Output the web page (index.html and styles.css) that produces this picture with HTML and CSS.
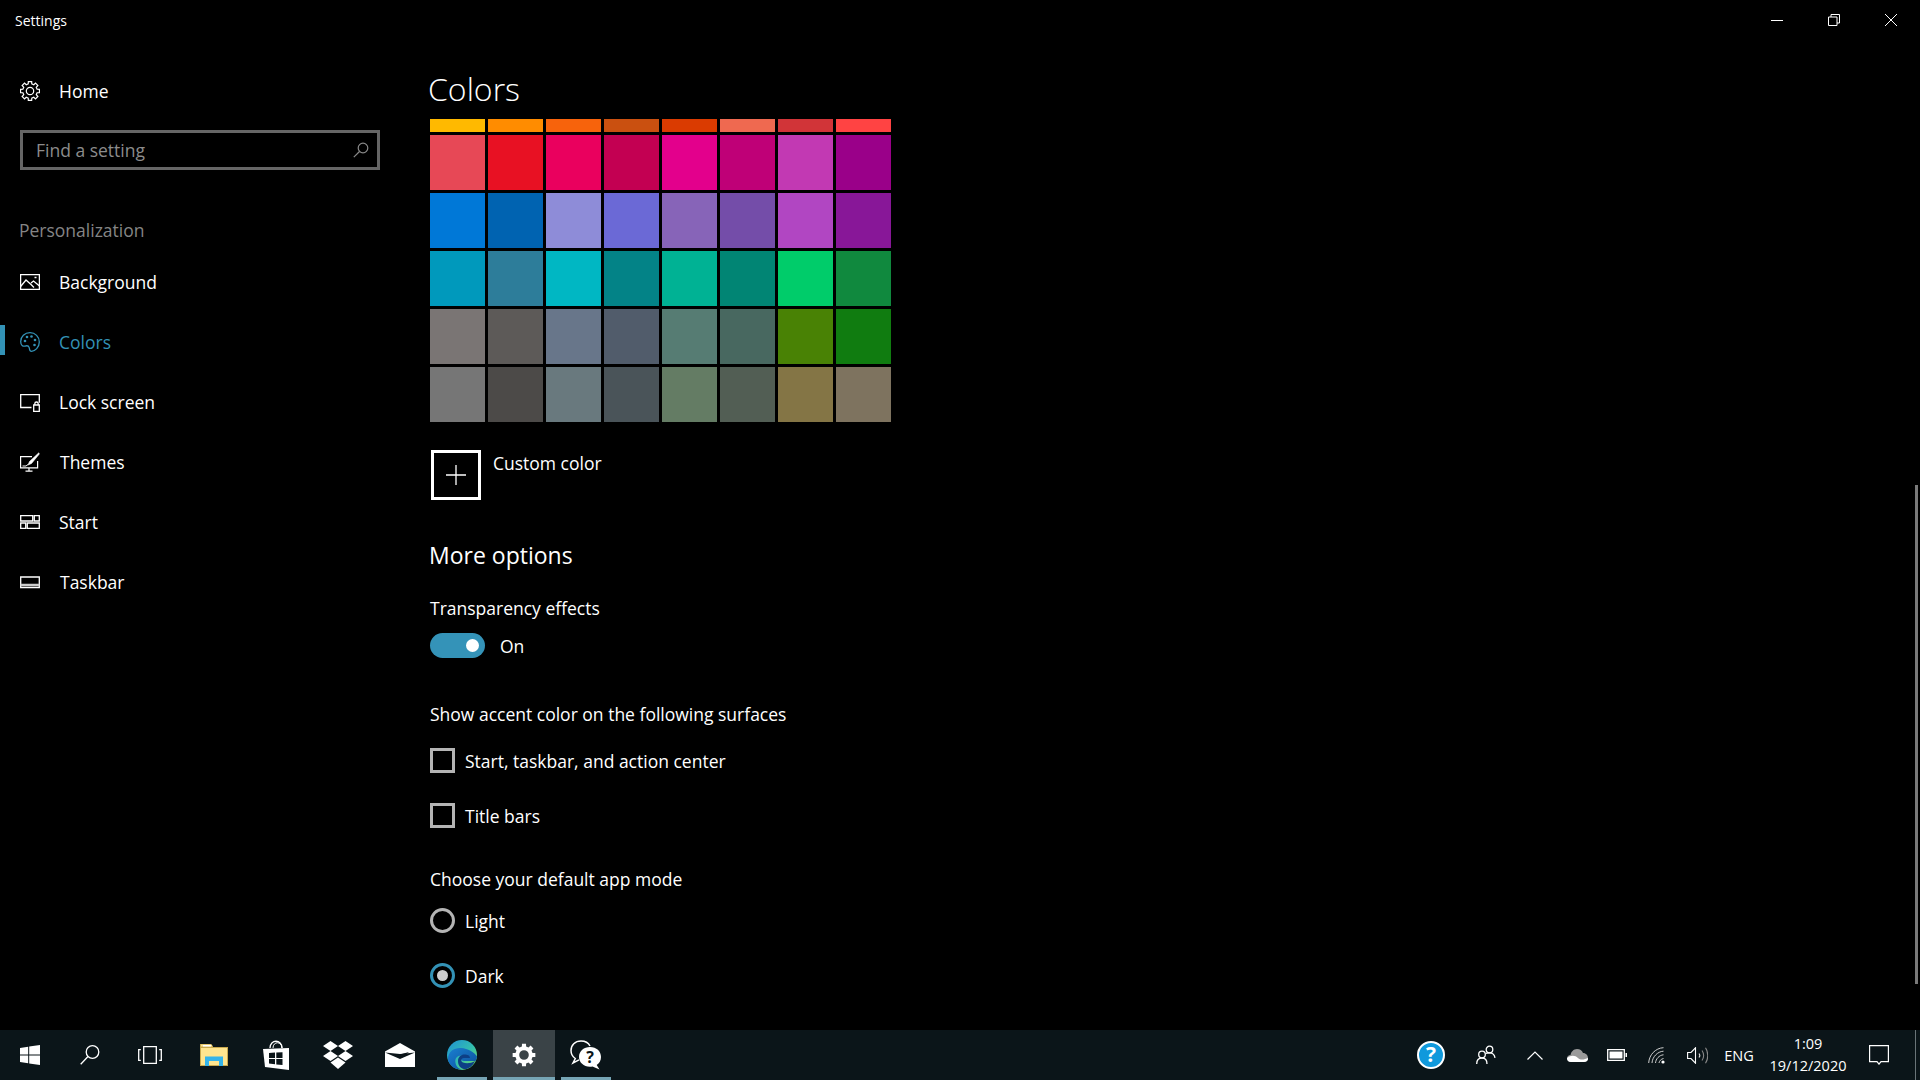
FILE: index.html
```html
<!DOCTYPE html>
<html lang="en">
<head>
<meta charset="UTF-8">
<title>Settings - Colors</title>
<link rel="stylesheet" href="styles.css">
</head>
<body>
<div class="window">
  <div class="titlebar">
    <span class="app-name">Settings</span>
    <div class="win-buttons">
      <div class="win-btn"><svg width="12" height="12" viewBox="0 0 12 12"><path d="M0 6.5h12" stroke="#fff" fill="none"/></svg></div>
      <div class="win-btn"><svg width="12" height="12" viewBox="0 0 12 12"><path d="M.5 3h8.500v8.500h-8.500zM3 3V.5h8.500V9H9" stroke="#fff" fill="none"/></svg></div>
      <div class="win-btn"><svg width="12" height="12" viewBox="0 0 12 12"><path d="M0 0l12 12M12 0L0 12" stroke="#fff" fill="none"/></svg></div>
    </div>
  </div>
  <div class="window-body">
    <div class="sidebar">
      <div class="nav-item home">
        <svg class="nav-icon" width="20" height="20" viewBox="0 0 20 20" fill="none" stroke="#fff" stroke-width="1.2"><polygon points="17.08,8.23 19.45,8.33 19.45,11.67 17.08,11.77 16.26,13.75 17.86,15.5 15.5,17.86 13.75,16.26 11.77,17.08 11.67,19.45 8.33,19.45 8.23,17.08 6.25,16.26 4.5,17.86 2.14,15.5 3.74,13.75 2.92,11.77 .55,11.67 .55,8.33 2.92,8.23 3.74,6.25 2.14,4.5 4.5,2.14 6.25,3.74 8.23,2.92 8.33,.55 11.67,.55 11.77,2.92 13.75,3.74 15.5,2.14 17.86,4.500 16.26,6.25"/><circle cx="10" cy="10" r="3.700"/></svg>
        <span>Home</span>
      </div>
      <div class="search-box">
        <input class="search-input" type="text" placeholder="Find a setting">
        <svg width="16" height="16" viewBox="0 0 16 16" fill="none" stroke="#8a8a8a" stroke-width="1.2"><circle cx="10" cy="6" r="4.800"/><path d="M6.500 9.500L.8 15.200"/></svg>
      </div>
      <div class="section-label">Personalization</div>
      <div class="nav-item">
        <svg class="nav-icon" width="20" height="20" viewBox="0 0 20 20" fill="none" stroke="#fff" stroke-width="1.300"><path d="M.6 2.600h18.800v14.800H.6z"/><path d="M.6 14.500L6 8l5 4.500 3 3M11 11l2.500-2 6 5"/><path d="M14.500 5.500h2" stroke-width="1.500"/></svg>
        <span>Background</span>
      </div>
      <div class="nav-item active">
        <svg class="nav-icon" width="20" height="20" viewBox="0 0 20 20" fill="none" stroke="#3392b6" stroke-width="1.300"><path d="M10 .7c5.200 0 9.300 4 9.300 9.200 0 5.400-4.300 9.400-7.800 9.400-2.300 0-1.800-2.200-2.300-3.700-.6-1.800-2.700-2-4.200-1.500C3 14.500.7 13.500.7 9.500.7 4.700 4.700.7 10 .7z"/><g fill="#3392b6" stroke="none"><circle cx="5" cy="9" r="1.300"/><circle cx="7" cy="5" r="1.300"/><circle cx="11.500" cy="4.500" r="1.300"/><circle cx="15" cy="8" r="1.300"/><circle cx="14.500" cy="13" r="1.300"/></g></svg>
        <span>Colors</span>
      </div>
      <div class="nav-item">
        <svg class="nav-icon" width="20" height="20" viewBox="0 0 20 20" fill="none" stroke="#fff" stroke-width="1.300"><path d="M11.500 15.500H.7V2.700h18.600v8"/><path d="M13.700 13h5.600v6.300h-5.600zM14.800 13v-1.300c0-2.300 3.400-2.300 3.400 0V13"/></svg>
        <span>Lock screen</span>
      </div>
      <div class="nav-item">
        <svg class="nav-icon" width="20" height="20" viewBox="0 0 20 20" fill="none" stroke="#fff" stroke-width="1.200"><path d="M12 4.600H.6v11.300h17V9"/><path d="M9 16v2.800M5.500 19.200h7"/><path d="M18.800.8L9.500 9.500 8 13l3.500-1.500 7.800-9.500z" fill="#fff" stroke-width=".6"/><path d="M2.500 14h3.500l2-1.500" stroke-width="1"/></svg>
        <span class="nudge">Themes</span>
      </div>
      <div class="nav-item">
        <svg class="nav-icon" width="20" height="20" viewBox="0 0 20 20" fill="none" stroke="#fff" stroke-width="1.300"><path d="M.7 3.700h12v5.300H.7zM14.300 3.700h5v5.300h-5zM.7 11h5v5.300h-5zM7.300 11h12v5.300h-12z"/></svg>
        <span>Start</span>
      </div>
      <div class="nav-item">
        <svg class="nav-icon" width="20" height="20" viewBox="0 0 20 20" fill="none" stroke="#fff" stroke-width="1.300"><path d="M.7 5h18.600v10.500H.7z"/><path d="M.7 13h18.600" stroke-width="2.500" stroke="#ccc"/></svg>
        <span class="nudge">Taskbar</span>
      </div>
    </div>

    <div class="content">
      <h1 class="page-title">Colors</h1>
      <div class="swatches">
        <div class="swatch c-ffb900"></div><div class="swatch c-ff8c00"></div><div class="swatch c-f7630c"></div><div class="swatch c-ca5010"></div><div class="swatch c-da3b01"></div><div class="swatch c-ef6950"></div><div class="swatch c-d13438"></div><div class="swatch c-ff4343"></div>
        <div class="swatch c-e74856"></div><div class="swatch c-e81123"></div><div class="swatch c-ea005e"></div><div class="swatch c-c30052"></div><div class="swatch c-e3008c"></div><div class="swatch c-bf0077"></div><div class="swatch c-c239b3"></div><div class="swatch c-9a0089"></div>
        <div class="swatch c-0078d7"></div><div class="swatch c-0063b1"></div><div class="swatch c-8e8cd8"></div><div class="swatch c-6b69d6"></div><div class="swatch c-8764b8"></div><div class="swatch c-744da9"></div><div class="swatch c-b146c2"></div><div class="swatch c-881798"></div>
        <div class="swatch c-0099bc"></div><div class="swatch c-2d7d9a"></div><div class="swatch c-00b7c3"></div><div class="swatch c-038387"></div><div class="swatch c-00b294"></div><div class="swatch c-018574"></div><div class="swatch c-00cc6a"></div><div class="swatch c-10893e"></div>
        <div class="swatch c-7a7574"></div><div class="swatch c-5d5a58"></div><div class="swatch c-68768a"></div><div class="swatch c-515c6b"></div><div class="swatch c-567c73"></div><div class="swatch c-486860"></div><div class="swatch c-498205"></div><div class="swatch c-107c10"></div>
        <div class="swatch c-767676"></div><div class="swatch c-4c4a48"></div><div class="swatch c-69797e"></div><div class="swatch c-4a5459"></div><div class="swatch c-647c64"></div><div class="swatch c-525e54"></div><div class="swatch c-847545"></div><div class="swatch c-7e735f"></div>
      </div>

      <div class="custom-color">
        <div class="custom-box"><svg width="20" height="20" viewBox="0 0 20 20"><path d="M10 0v20M0 10h20" stroke="#fff" stroke-width="1.300" fill="none"/></svg></div>
        <span class="custom-label">Custom color</span>
      </div>

      <h2 class="sub-title">More options</h2>

      <div class="option-title first">Transparency effects</div>
      <div class="toggle-row">
        <div class="toggle"><div class="knob"></div></div>
        <span class="toggle-label">On</span>
      </div>

      <div class="option-title accent-title">Show accent color on the following surfaces</div>
      <div class="check-list">
        <div class="check-row"><div class="checkbox"></div><span>Start, taskbar, and action center</span></div>
        <div class="check-row"><div class="checkbox"></div><span>Title bars</span></div>
      </div>

      <div class="option-title mode-title">Choose your default app mode</div>
      <div class="radio-list">
        <div class="check-row"><div class="radio"></div><span>Light</span></div>
        <div class="check-row"><div class="radio checked"><div class="radio-dot"></div></div><span>Dark</span></div>
      </div>
    </div>
  </div>
  <div class="scroll-thumb"></div>
</div>

<div class="taskbar">
  <div class="task-items">
    <div class="task-btn narrow"><svg width="20" height="20" viewBox="0 0 20 20" fill="#fff"><path d="M0 3l8.200-1.200v7.700H0zM9.200 1.600L20 0v9.500H9.200zM0 10.500h8.200v7.700L0 17zM9.200 10.500H20V20L9.200 18.400z"/></svg></div>
    <div class="task-btn narrow"><svg width="20" height="20" viewBox="0 0 20 20" fill="none" stroke="#fff" stroke-width="1.300"><circle cx="12.500" cy="7" r="6.300"/><path d="M8 11.500L.7 19.300"/></svg></div>
    <div class="task-btn narrow"><svg width="24" height="18" viewBox="0 0 24 18" fill="none" stroke="#fff" stroke-width="1.300"><path d="M5.700.7h12.600v16.600H5.700zM2.800 3.700H.7v10.600h2.100M21.200 3.700h2.100v10.600h-2.100"/></svg></div>
    <div class="task-btn after-gap"><svg width="28" height="24" viewBox="0 0 28 24"><path d="M0 1h11l2 3h15v19H0z" fill="#c9a94e"/><path d="M1 5h26v17H1z" fill="#ffe58f"/><path d="M1 1.500h10.500L13 3.500H1z" fill="#ffe58f"/><path d="M3 2h8v1.500H3z" fill="#fff"/><path d="M5 23v-9.500h18V23h-4v-5H9v5z" fill="#35b4ea"/></svg></div>
    <div class="task-btn"><svg width="26" height="30" viewBox="0 0 26 30"><path d="M7 8c0-9 12-9 12 0" fill="none" stroke="#fff" stroke-width="1.300"/><path d="M10 8c0-7 9-7 9 0" fill="none" stroke="#fff" stroke-width="1"/><path d="M0 9l26-1v22L2 27z" fill="#fff"/><path d="M6 13l6-.4v5.400H6zM13.300 12.500l6.200-.3v5.800h-6.200zM6 19h6v5.200l-6-.6zM13.300 19h6.200v6l-6.200-.6z" fill="#0b1519"/></svg></div>
    <div class="task-btn"><svg width="30" height="28" viewBox="0 0 30 28" fill="#fff"><path d="M7.500 0L15 5 7.500 10 0 5zM22.500 0L30 5l-7.500 5L15 5zM7.500 10L15 15l-7.500 5L0 15zM22.500 10L30 15l-7.500 5L15 15z"/><path d="M7.500 21.500L15 16.500l7.500 5L15 28z"/></svg></div>
    <div class="task-btn"><svg width="30" height="24" viewBox="0 0 30 24"><path d="M0 8.500L15 0l15 8.500V24H0z" fill="#fff"/><path d="M0 9.500l15 6.500L30 9.500 15 11z" fill="#0b1519"/><path d="M15 11.500l9-2.500-7.500 6z" fill="#0b1519"/></svg></div>
    <div class="task-btn open">
      <svg width="30" height="30" viewBox="0 0 30 30">
        <defs>
          <linearGradient id="edgeTop" x1="0" y1="0" x2="1" y2="1"><stop offset="0" stop-color="#1f8fd6"/><stop offset=".55" stop-color="#33bfae"/><stop offset="1" stop-color="#7fe05a"/></linearGradient>
          <linearGradient id="edgeLow" x1="0" y1="0" x2="1" y2="1"><stop offset="0" stop-color="#1a7fd0"/><stop offset="1" stop-color="#0c4f9c"/></linearGradient>
        </defs>
        <circle cx="15" cy="15" r="15" fill="url(#edgeTop)"/>
        <path d="M1 20C.5 11 8 7.500 14 8c7 .6 13 4 16 8.500-.3 2-1 3.500-1.500 4.500H17c-4 0-3-4-.5-5-5-1.500-9 1.500-8 7 .6 3.500 3.500 6 7 6.500C8 30 3 26 1 20z" fill="url(#edgeLow)"/>
        <path d="M11 21c0-4 3-6.500 6.500-6.500 3 0 5.500 1 5.500 3.500H17c-3 0-3.500 3.500-1 4.500 3 1.200 8 1 12-1.500-2.500 5.500-7 8.500-11 8-3-.5-6-3-6-8z" fill="#0d3f86"/>
      </svg>
    </div>
    <div class="task-btn open active"><svg width="24" height="24" viewBox="0 0 20 20"><path fill="#fff" fill-rule="evenodd" d="M17.08 8.23L19.45 8.330V11.670L17.08 11.770 16.26 13.750 17.86 15.500 15.500 17.860 13.750 16.260 11.770 17.080 11.670 19.450H8.330L8.230 17.080 6.250 16.260 4.500 17.860 2.140 15.500 3.740 13.750 2.920 11.770 .55 11.670V8.330L2.920 8.230 3.740 6.250 2.140 4.500 4.500 2.140 6.250 3.740 8.230 2.920 8.330 .55H11.670L11.770 2.920 13.750 3.740 15.500 2.140 17.860 4.500 16.260 6.250zM10 6a4 4 0 1 0 0 8 4 4 0 0 0 0-8z"/></svg></div>
    <div class="task-btn open"><svg width="32" height="30" viewBox="0 0 32 30"><path d="M11 1C5 1 1 5 1 10.500c0 3.500 1.800 6.300 4.300 8L3 23l6-3.200" fill="none" stroke="#fff" stroke-width="1.500"/><path d="M11 1c4 0 7.500 2 9 5" fill="none" stroke="#fff" stroke-width="1.500"/><path d="M20 7c6.500 0 11 4.300 11 10 0 3.500-1.700 6.300-4.300 8l2.800 4.500-7-3c-7.500 1.500-13.500-3.500-13.500-9.500C9 11 14 7 20 7z" fill="#fff"/><text class="chat-mark" x="20" y="22.500">?</text></svg></div>
  </div>

  <div class="tray">
    <div class="tray-item help"><svg width="28" height="28" viewBox="0 0 28 28"><circle cx="14" cy="14" r="13" fill="#1099dc" stroke="#fff" stroke-width="2"/><text class="help-mark" x="14" y="21">?</text></svg></div>
    <div class="tray-item people"><svg width="20" height="20" viewBox="0 0 20 20" fill="none" stroke="#fff" stroke-width="1.300"><circle cx="13.500" cy="4.500" r="3.300"/><circle cx="6" cy="9.500" r="3.300"/><path d="M.7 19c0-3.500 2-6 5.300-6s5 2.500 5 6M9.500 8.500c1-.6 2.500-.7 4-.7 3 0 5 2 5.500 5"/></svg></div>
    <div class="tray-item chevron"><svg width="16" height="9" viewBox="0 0 16 9" fill="none" stroke="#fff" stroke-width="1.200"><path d="M.5 8.500L8 1l7.500 7.500"/></svg></div>
    <div class="tray-item"><svg width="21" height="13" viewBox="0 0 21 13"><path d="M4 13C1.500 13 0 11.500 0 9.500 0 7.500 1.500 6 3.500 6 4 3 6.500 0 10 0c3 0 5 1.500 6 4 3 0 5 2.500 5 5 0 2.300-1.500 4-4 4z" fill="#9a9a9a"/><path d="M0 9c4-3 8-3 11 0s7 1 10 0v1c0 2-2 3-4 3H4c-2.500 0-4-1.500-4-4z" fill="#fff"/></svg></div>
    <div class="tray-item"><svg width="20" height="12" viewBox="0 0 20 12" fill="none"><path d="M.7.7h16.600v10.600H.7z" stroke="#fff" stroke-width="1.300"/><path d="M2.500 2.500h13v7h-13z" fill="#fff"/><path d="M18.500 4h1.500v4h-1.500z" fill="#fff"/></svg></div>
    <div class="tray-item"><svg width="18" height="17" viewBox="0 0 18 17" fill="none" stroke="#cfcfcf" stroke-width="1"><path d="M.7 16C1 8 7.500 1 15.500.7M4 16c.3-6 5.500-11.500 11.500-11.800M7.500 16c.3-4 3.500-7.800 8-8.200M11 16c.3-2 2-4 4.500-4.500"/><circle cx="15" cy="15" r="1.600" fill="#fff" stroke="none"/></svg></div>
    <div class="tray-item"><svg width="21" height="17" viewBox="0 0 21 17" fill="none" stroke="#fff" stroke-width="1.100"><path d="M.6 5.500h3.400L8.500.8v15.400L4 11.500H.6z"/><path d="M12 6.500c1 1.200 1 2.800 0 4" stroke="#ddd"/><path d="M15 3.500c2 3 2 7 0 10M18.500 .8c3 4.500 3 11 0 15.400" stroke="#888"/></svg></div>
    <div class="tray-item lang">ENG</div>
    <div class="tray-item clock"><span>1:09</span><span>19/12/2020</span></div>
    <div class="tray-item notify"><svg width="20" height="20" viewBox="0 0 20 20" fill="none" stroke="#fff" stroke-width="1.200"><path d="M.6.6h18.800v16H12l-2 2.500-2-2.500H.6z"/></svg></div>
    <div class="show-desktop"></div>
  </div>
</div>
</body>
</html>
```

FILE: styles.css
```css
* { box-sizing: border-box; }
body { margin: 0; width: 1920px; height: 1080px; overflow: hidden; background-color: #000; color: #fff; font-family: "Open Sans", "Liberation Sans", sans-serif; font-size: 17.5px; display: flex; flex-direction: column; }

.window { position: relative; height: 1030px; display: flex; flex-direction: column; background-color: #000; }
.titlebar { height: 40px; flex-shrink: 0; display: flex; justify-content: space-between; align-items: center; padding-left: 15px; }
.app-name { font-size: 14px; }
.win-buttons { display: flex; padding-right: 1px; }
.win-btn { width: 57px; height: 40px; display: flex; align-items: center; justify-content: center; }
.window-body { flex: 1; display: flex; overflow: hidden; }

.sidebar { width: 430px; flex-shrink: 0; padding-top: 21px; }
.nav-item { position: relative; height: 60px; display: flex; align-items: center; padding-left: 20px; }
.nav-icon { margin-right: 19px; flex-shrink: 0; }
.nudge { margin-left: 1px; }
.nav-item.active { color: #3392b6; }
.nav-item.active::before { content: ""; position: absolute; left: 0; top: 13px; width: 5px; height: 30px; background-color: #3392b6; }
.search-box { width: 360px; height: 40px; margin: 9px 0 0 20px; border: 3px solid #666; display: flex; align-items: center; justify-content: space-between; padding: 0 8px 0 13px; }
.search-input { flex: 1; min-width: 0; background: none; border: none; outline: none; padding: 0; color: #fff; font-family: inherit; font-size: 17.5px; }
.search-input::placeholder { color: #8c8c8c; opacity: 1; }
.section-label { margin: 40px 0 2px 19px; height: 40px; line-height: 40px; color: #858585; }

.content { flex: 1; }
.page-title { margin: 29px 0 10px -2px; height: 40px; line-height: 40px; font-size: 32px; font-weight: 300; }
.swatches { display: grid; grid-template-columns: repeat(8, 55px); grid-template-rows: 13px repeat(5, 55px); gap: 3px; }

.c-ffb900 { background-color: #ffb900; } .c-ff8c00 { background-color: #ff8c00; } .c-f7630c { background-color: #f7630c; } .c-ca5010 { background-color: #ca5010; }
.c-da3b01 { background-color: #da3b01; } .c-ef6950 { background-color: #ef6950; } .c-d13438 { background-color: #d13438; } .c-ff4343 { background-color: #ff4343; }
.c-e74856 { background-color: #e74856; } .c-e81123 { background-color: #e81123; } .c-ea005e { background-color: #ea005e; } .c-c30052 { background-color: #c30052; }
.c-e3008c { background-color: #e3008c; } .c-bf0077 { background-color: #bf0077; } .c-c239b3 { background-color: #c239b3; } .c-9a0089 { background-color: #9a0089; }
.c-0078d7 { background-color: #0078d7; } .c-0063b1 { background-color: #0063b1; } .c-8e8cd8 { background-color: #8e8cd8; } .c-6b69d6 { background-color: #6b69d6; }
.c-8764b8 { background-color: #8764b8; } .c-744da9 { background-color: #744da9; } .c-b146c2 { background-color: #b146c2; } .c-881798 { background-color: #881798; }
.c-0099bc { background-color: #0099bc; } .c-2d7d9a { background-color: #2d7d9a; } .c-00b7c3 { background-color: #00b7c3; } .c-038387 { background-color: #038387; }
.c-00b294 { background-color: #00b294; } .c-018574 { background-color: #018574; } .c-00cc6a { background-color: #00cc6a; } .c-10893e { background-color: #10893e; }
.c-7a7574 { background-color: #7a7574; } .c-5d5a58 { background-color: #5d5a58; } .c-68768a { background-color: #68768a; } .c-515c6b { background-color: #515c6b; }
.c-567c73 { background-color: #567c73; } .c-486860 { background-color: #486860; } .c-498205 { background-color: #498205; } .c-107c10 { background-color: #107c10; }
.c-767676 { background-color: #767676; } .c-4c4a48 { background-color: #4c4a48; } .c-69797e { background-color: #69797e; } .c-4a5459 { background-color: #4a5459; }
.c-647c64 { background-color: #647c64; } .c-525e54 { background-color: #525e54; } .c-847545 { background-color: #847545; } .c-7e735f { background-color: #7e735f; }

.custom-color { display: flex; align-items: flex-start; margin: 28px 0 0 1px; }
.custom-box { width: 50px; height: 50px; border: 3px solid #fff; display: flex; align-items: center; justify-content: center; }
.custom-label { margin-left: 12px; line-height: 26px; }

.sub-title { margin: 35px 0 0 -1px; height: 40px; line-height: 40px; font-size: 23px; font-weight: 400; }
.option-title { line-height: 26px; }
.option-title.first { margin-top: 20px; }
.accent-title { margin-top: 43px; }
.mode-title { margin-top: 38px; }

.toggle-row { display: flex; align-items: center; margin-top: 12px; }
.toggle { width: 55px; height: 25px; border-radius: 13px; background-color: #3493b8; display: flex; align-items: center; justify-content: flex-end; padding-right: 6px; }
.knob { width: 13px; height: 13px; border-radius: 50%; background-color: #fff; }
.toggle-label { margin-left: 15px; }

.check-list { display: flex; flex-direction: column; gap: 30px; margin-top: 21px; }
.radio-list { display: flex; flex-direction: column; gap: 30px; margin-top: 16px; }
.check-row { display: flex; align-items: center; height: 25px; gap: 10px; }
.checkbox { width: 25px; height: 25px; border: 3px solid #b4b4b4; }
.radio { width: 25px; height: 25px; border: 3px solid #b4b4b4; border-radius: 50%; display: flex; align-items: center; justify-content: center; }
.radio.checked { border-color: #3392b6; }
.radio-dot { width: 11px; height: 11px; border-radius: 50%; background-color: #cfcfcf; }

.scroll-thumb { position: absolute; left: 1915px; top: 485px; width: 3px; height: 499px; background-color: #7a7a7a; }

.taskbar { height: 50px; flex-shrink: 0; background-color: #0b1519; display: flex; justify-content: space-between; }
.task-items { display: flex; }
.task-btn { position: relative; width: 62px; height: 50px; display: flex; align-items: center; justify-content: center; }
.task-btn.narrow { width: 60px; }
.task-btn.after-gap { margin-left: 3px; }
.task-btn.active { background-color: #3a4347; }
.task-btn.open::after { content: ""; position: absolute; left: 6px; right: 6px; bottom: 0; height: 3px; background-color: #76a5b5; }
.task-btn.active::after { left: 0; right: 0; }
.chat-mark { font-size: 16px; font-weight: 700; fill: #0b1519; text-anchor: middle; }
.help-mark { font-size: 21px; font-weight: 700; fill: #fff; text-anchor: middle; }

.tray { display: flex; align-items: stretch; }
.tray-item { width: 40px; display: flex; align-items: center; justify-content: center; }
.tray-item.help { width: 55px; }
.tray-item.people { width: 55px; }
.tray-item.chevron { width: 44px; }
.tray-item.lang { width: 44px; font-size: 14.500px; }
.tray-item.clock { width: 94px; flex-direction: column; font-size: 14.500px; line-height: 22px; padding-bottom: 1px; }
.tray-item.notify { width: 48px; }
.show-desktop { width: 17px; position: relative; }
.show-desktop::before { content: ""; position: absolute; left: 12px; top: 0; bottom: 0; width: 1px; background-color: #6a7478; }
```
